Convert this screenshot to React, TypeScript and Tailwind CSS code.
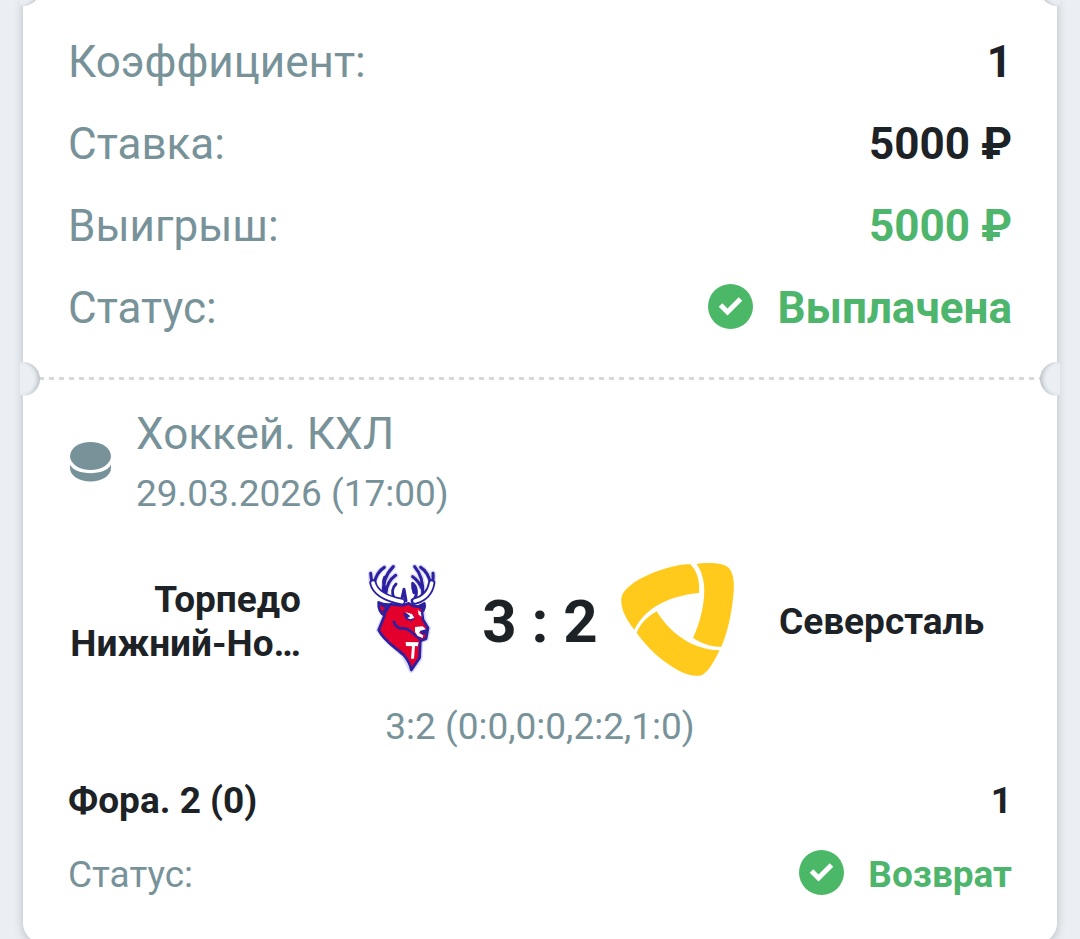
import type { ReactNode } from "react";

const totals = [
  { label: "Коэффициент:", value: "1", color: "text-[#1d2226]" },
  { label: "Ставка:", value: "5000 ₽", color: "text-[#1d2226]" },
  { label: "Выигрыш:", value: "5000 ₽", color: "text-[#4eb56d]" },
];

function CheckBadge() {
  return (
    <svg className="mb-1 size-[45px] shrink-0" viewBox="0 0 45 45" aria-hidden="true">
      <circle cx="22.5" cy="22.5" r="22.5" fill="#4ab866" />
      <path d="M12.500 21L19.500 28L32.500 15" fill="none" stroke="#fff" strokeWidth="5" />
    </svg>
  );
}

function PuckIcon() {
  return (
    <svg className="h-10 w-11 shrink-0" viewBox="0 0 44 40" fill="#78929a" aria-hidden="true">
      <ellipse cx="22.5" cy="14" rx="20.5" ry="14" />
      <path d="M2 22.500C6.500 34 38.500 34 43 22.500V26C43 34 33.500 39.500 22.500 39.500S2 34 2 26Z" />
    </svg>
  );
}

function TorpedoLogo() {
  return (
    <svg className="size-[114px] shrink-0" viewBox="-15 39 342 342" role="img" aria-label="Торпедо">
      <g strokeLinecap="round" strokeLinejoin="round" fill="none">
        {/* pale edge round the dark lines */}
        <g stroke="#dcdaf5" strokeWidth="17">
          <path d="M62 70C58 108 84 146 158 158M249 70C254 112 236 144 194 156" />
          <path d="M72 98C77 78 86 62 103 52M101 132C97 104 108 72 130 50M108 126C110 104 120 88 137 76" />
          <path d="M243 98C236 76 226 60 212 52M218 128C220 100 212 70 194 50M214 112C208 98 200 88 188 80" />
          <path d="M104 198L86 240L118 276L161 315L184 360L209 325L212 272L228 266L234 235L220 210L217 184" />
        </g>
        {/* antlers */}
        <g stroke="#2a20a0" strokeWidth="9">
          <path d="M62 70C62 84 64 92 70 104M72 102C77 78 86 62 103 52" />
          <path d="M101 136C97 104 108 72 130 50M108 128C110 104 120 88 137 76M104 112C99 100 100 90 104 82" />
          <path d="M132 144C124 128 128 112 138 102M154 154L162 118L168 152" />
          <path d="M249 70C251 84 250 92 244 104M243 102C236 76 226 60 212 52" />
          <path d="M218 132C220 100 212 70 194 50M216 116C208 98 200 88 188 80" />
          <path d="M192 150C204 132 200 110 188 100M192 128C188 118 187 112 188 102" />
        </g>
        <g stroke="#2a20a0" strokeWidth="22">
          <path d="M69 99C75 126 100 144 155 155" />
          <path d="M245 99C240 130 222 146 193 154" />
        </g>
        <g stroke="#fff" strokeWidth="11">
          <path d="M69 99C75 126 100 144 156 155" />
          <path d="M245 99C240 130 222 146 195 153" />
        </g>
      </g>
      {/* head and neck */}
      <path
        d="M86 157C98 163 110 165 122 163C138 162 150 170 164 164L176 160L190 168L205 170L223 160C226 172 222 180 216 186L219 209L234 234L228 266L211 273L209 323L184 360C180 340 172 328 161 315C138 294 100 272 86 240L104 196C92 192 84 176 86 157Z"
        fill="#e4002d"
        stroke="#2a20a0"
        strokeWidth="8"
        strokeLinejoin="round"
      />
      <path d="M88 158L124 163L120 172L106 194L96 184L106 174L92 168Z" fill="#2a20a0" />
      <path d="M199 167L224 158L218 182L208 174Z" fill="#2a20a0" />
      <path d="M131 212C134 228 144 236 162 236C184 236 190 256 212 268" fill="none" stroke="#2a20a0" strokeWidth="8" />
      <path d="M158 188L168 208L184 214L194 204L190 196Z" fill="#2a20a0" />
      <path d="M166 186L186 192L193 203L182 208L172 204L181 199Z" fill="#fff" />
      <path d="M203 179L212 187L215 200L206 194Z" fill="#fff" />
      <path d="M195 231L218 229L229 239L222 243H212L207 249L220 256L218 264L203 258L195 246Z" fill="#fff" />
      <path d="M209 243L232 236L230 250L217 254Z" fill="#2a20a0" />
      <path d="M167 276L206 277L203 289L195 288L192 326H183L186 289L168 288Z" fill="#fff" />
    </svg>
  );
}

function SeverstalLogo() {
  return (
    <svg className="size-[114px] shrink-0" viewBox="33 39 342 342" role="img" aria-label="Северсталь">
      <g fill="#ffca1c">
        <path d="M34 145C39 109 105 73 171 54C199 46 221 42 241 43C263 65 270 96 267 129C187 137 110 166 73 239C49 208 32 179 34 145Z" />
        <path d="M260 42C295 36 330 38 350 49C370 63 373 91 371 125C366 188 353 246 334 290C304 292 276 281 249 264C272 213 286 157 282 105C279 79 272 59 260 42Z" />
        <path d="M140 184C174 241 239 299 329 301C312 334 298 362 278 374C260 382 234 376 207 362C154 334 111 292 80 249C90 222 111 201 140 184Z" />
      </g>
    </svg>
  );
}

/* Half-round cut-outs on both edges of the ticket */
function Notches() {
  const notch = "absolute top-1/2 size-[34px] -translate-y-1/2 rounded-full bg-[#ebeff4]";
  return (
    <>
      <span className={`${notch} -left-[17px] shadow-[inset_-4px_0_4px_-2px_rgba(60,70,80,0.3)] [clip-path:inset(0_0_0_14px)]`} />
      <span className={`${notch} -right-[17px] shadow-[inset_4px_0_4px_-2px_rgba(60,70,80,0.3)] [clip-path:inset(0_14px_0_0)]`} />
    </>
  );
}

function Row({ label, children }: { label: string; children: ReactNode }) {
  return (
    <div className="flex items-center justify-between">
      <dt className="text-[#78929a]">{label}</dt>
      <dd className="flex items-center gap-6 font-bold">{children}</dd>
    </div>
  );
}

export default function App() {
  return (
    <main className="min-h-screen overflow-hidden bg-[#ebeff4] px-[23px] font-[Roboto,sans-serif] text-[#1d2226]">
      <article className="relative rounded-b-[20px] bg-white shadow-[0_2px_10px_rgba(60,70,80,0.3)]">
        <div className="absolute inset-x-0 -top-[11px]">
          <Notches />
        </div>

        <dl className="flex flex-col gap-8 px-[45px] pt-[37px] pb-11 text-[44px] leading-[50px]">
          {totals.map((row) => (
            <Row key={row.label} label={row.label}>
              <span className={row.color}>{row.value}</span>
            </Row>
          ))}
          <Row label="Статус:">
            <CheckBadge />
            <span className="text-[#4eb56d]">Выплачена</span>
          </Row>
        </dl>

        <div className="relative px-4">
          <div className="h-[3px] bg-[repeating-linear-gradient(90deg,#d6d9d9_0_5px,transparent_5px_10px)]" />
          <Notches />
        </div>

        <section className="px-[45px] pt-7 pb-11 text-[37px] leading-[44px]">
          <header className="flex items-center gap-6 text-[#78929a]">
            <PuckIcon />
            <div>
              <h2 className="text-[44px] leading-[52px]">Хоккей. КХЛ</h2>
              <time className="mt-3 block" dateTime="2026-03-29T17:00">
                29.03.2026 (17:00)
              </time>
            </div>
          </header>

          <div className="mt-[47px] flex items-center">
            <h3 className="mr-11 min-w-0 flex-1 pt-1 text-right font-bold">
              Торпедо
              <br />
              Нижний-Но…
            </h3>
            <TorpedoLogo />
            <p className="w-[162px] shrink-0 pt-1 text-center text-[60px] leading-[60px] font-bold">3 : 2</p>
            <SeverstalLogo />
            <h3 className="ml-11 min-w-0 flex-1 pt-1 font-bold">Северсталь</h3>
          </div>
          <p className="mt-7 text-center text-[#78929a]">3:2 (0:0,0:0,2:2,1:0)</p>

          <div className="mt-[30px] flex justify-between font-bold">
            <span>Фора. 2 (0)</span>
            <span>1</span>
          </div>
          <dl className="mt-[27px]">
            <Row label="Статус:">
              <CheckBadge />
              <span className="text-[#4eb56d]">Возврат</span>
            </Row>
          </dl>
        </section>
      </article>
    </main>
  );
}
